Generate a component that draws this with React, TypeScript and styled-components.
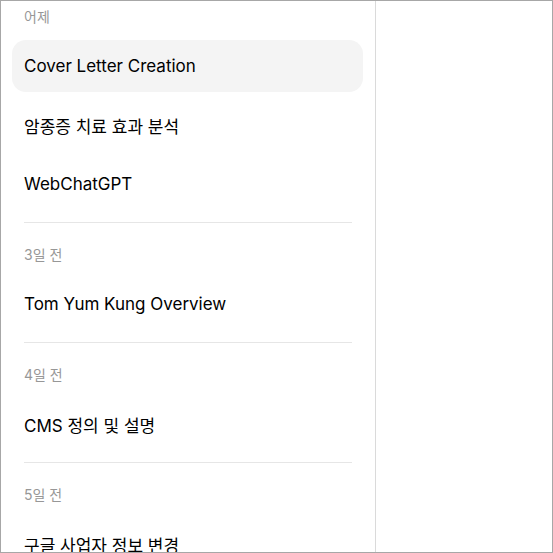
import React from 'react'
import styled, { createGlobalStyle } from 'styled-components'

const GlobalStyle = createGlobalStyle`
  html, body {
    margin: 0;
    padding: 0;
    background: #fff;
    overflow: hidden;
  }
  body {
    font-family: Inter, 'Noto Sans CJK KR', sans-serif;
    -webkit-font-smoothing: antialiased;
  }
`

type Chat = { title: string; active?: boolean }
type Section = { label: string; chats: Chat[] }

const sections: Section[] = [
  {
    label: '어제',
    chats: [{ title: 'Cover Letter Creation', active: true }, { title: '암종증 치료 효과 분석' }, { title: 'WebChatGPT' }],
  },
  { label: '3일 전', chats: [{ title: 'Tom Yum Kung Overview' }] },
  { label: '4일 전', chats: [{ title: 'CMS 정의 및 설명' }] },
  { label: '5일 전', chats: [{ title: '구글 사업자 정보 변경' }] },
]

const App = () => {
  return (
    <Frame>
      <GlobalStyle />
      <Sidebar>
        {sections.map((section, i) => (
          <React.Fragment key={section.label}>
            {i > 0 && <Divider />}
            <SectionLabel first={i === 0}>{section.label}</SectionLabel>
            <ChatList>
              {section.chats.map((chat) => (
                <ChatItem key={chat.title} active={chat.active}>
                  {chat.title}
                </ChatItem>
              ))}
            </ChatList>
          </React.Fragment>
        ))}
      </Sidebar>
      <Main />
    </Frame>
  )
}

// frame
const Frame = styled.div`
  box-sizing: border-box;
  width: 553px;
  height: 553px;
  border: 1px solid #a7a7a7;
  display: flex;
  overflow: hidden;
  background: #fff;
`

// sidebar
const Sidebar = styled.div`
  box-sizing: border-box;
  width: 375px;
  flex-shrink: 0;
  padding: 0 12px 0 11px;
  border-right: 1px solid #dadada;
  display: flex;
  flex-direction: column;
`

const SectionLabel = styled.div<{ first?: boolean }>`
  padding: ${({ first }) => (first ? '6px' : '22px')} 12px 13px;
  height: 20px;
  line-height: 20px;
  font-size: 14px;
  color: #979797;
`

const ChatList = styled.div`
  display: flex;
  flex-direction: column;
  gap: 7px;
  padding-bottom: 12px;
`

const ChatItem = styled.div<{ active?: boolean }>`
  height: 52px;
  display: flex;
  align-items: center;
  padding: 0 12px;
  border-radius: 14px;
  background: ${({ active }) => (active ? '#f4f4f4' : 'transparent')};
  font-size: 17px;
  color: #000;
  white-space: nowrap;
`

const Divider = styled.div`
  height: 1px;
  flex-shrink: 0;
  margin: 0 11px 0 12px;
  background: #e6e6e6;
`

// main
const Main = styled.div`
  flex: 1;
`

export default App
